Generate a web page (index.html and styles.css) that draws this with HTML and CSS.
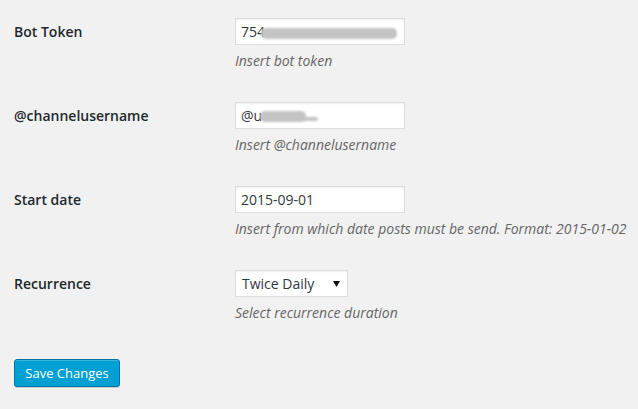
FILE: index.html
```html
<!DOCTYPE html>
<html>
<head>
<meta charset="utf-8">
<link rel="stylesheet" href="styles.css">
</head>
<body>
<div class="form">
  <div class="row">
    <div class="label">Bot Token</div>
    <div class="cell">
      <div class="field wide"><span class="val">754</span><span class="redact r1"></span></div>
      <div class="desc">Insert bot token</div>
    </div>
  </div>
  <div class="row">
    <div class="label">@channelusername</div>
    <div class="cell">
      <div class="field wide"><span class="val">@u</span><span class="redact r2"></span><span class="redact r2t"></span></div>
      <div class="desc">Insert @channelusername</div>
    </div>
  </div>
  <div class="row">
    <div class="label">Start date</div>
    <div class="cell">
      <div class="field wide"><span class="val">2015-09-01</span></div>
      <div class="desc">Insert from which date posts must be send. Format: 2015-01-02</div>
    </div>
  </div>
  <div class="row">
    <div class="label">Recurrence</div>
    <div class="cell">
      <div class="field select"><span class="val">Twice Daily</span><svg class="arrow" width="7" height="6" viewBox="0 0 7 6"><path d="M0 0H7L3.5 6Z" fill="#111"/></svg></div>
      <div class="desc">Select recurrence duration</div>
    </div>
  </div>
  <div class="actions">
    <button class="btn">Save Changes</button>
  </div>
</div>
</body>
</html>
```
FILE: styles.css
```css
html, body {
  margin: 0;
  padding: 0;
  background: #f1f1f1;
}
body {
  font-family: "Open Sans", "Liberation Sans", sans-serif;
  color: #23282d;
  width: 638px;
  height: 409px;
  overflow: hidden;
}
.form {
  padding: 18px 0 0 14px;
}
.row {
  display: flex;
  align-items: flex-start;
  margin-bottom: 32px;
}
.label {
  width: 221px;
  flex: none;
  font-size: 14px;
  font-weight: 600;
  line-height: 18px;
  padding-top: 5px;
}
.cell {
  display: flex;
  flex-direction: column;
  align-items: flex-start;
}
.field {
  box-sizing: border-box;
  height: 27px;
  background: #fff;
  border: 1px solid #ddd;
  box-shadow: inset 0 1px 2px rgba(0,0,0,0.07);
  display: flex;
  align-items: center;
  padding: 0 6px 0 5px;
  font-size: 14px;
  color: #32373c;
  overflow: hidden;
  white-space: nowrap;
}
.field .val {
  line-height: 18px;
}
.wide {
  width: 170px;
}
.select {
  width: 113px;
  padding-left: 6px;
  justify-content: space-between;
  padding-right: 7px;
}
.arrow {
  display: block;
  margin-top: 1px;
}
.redact {
  display: block;
  height: 11px;
  background: #c4c4c4;
  border-radius: 5px;
  filter: blur(1.2px);
  flex: none;
}
.r1 {
  width: 136px;
  margin-left: -4px;
  margin-top: 3px;
}
.r2 {
  width: 46px;
  margin-left: -2px;
  margin-top: 1px;
}
.r2t {
  width: 16px;
  height: 4px;
  margin-left: -4px;
  margin-top: 6px;
}
.desc {
  margin-top: 7px;
  font-size: 14px;
  font-style: italic;
  line-height: 18px;
  color: #666;
  white-space: nowrap;
}
.actions {
  padding-top: 5px;
}
.btn {
  box-sizing: border-box;
  width: 106px;
  height: 28px;
  margin: 0;
  padding: 0 10px 1px;
  font-family: "Open Sans", "Liberation Sans", sans-serif;
  font-size: 13px;
  line-height: 26px;
  color: #fff;
  background: #00a0d2;
  border: 1px solid #0073aa;
  border-radius: 3px;
  box-shadow: inset 0 1px 0 rgba(120,200,230,0.5), 0 1px 0 rgba(0,0,0,0.15);
  cursor: pointer;
}
```
